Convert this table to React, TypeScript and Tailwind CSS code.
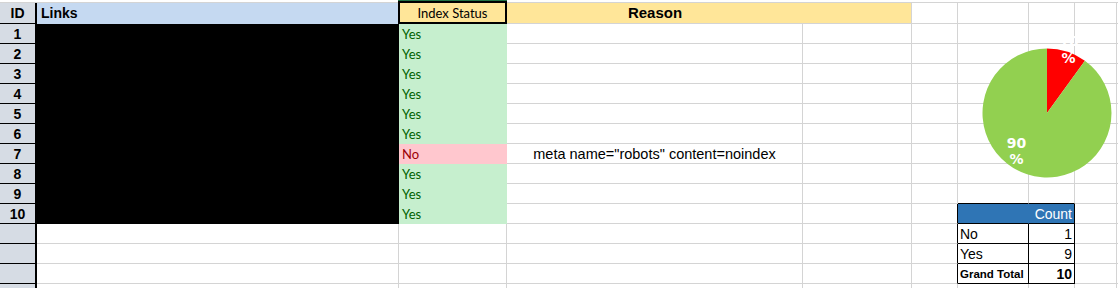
import React from "react";

const rows = Array.from({ length: 14 }, (_, i) => (i < 10 ? i + 1 : null));

function idCell(id: number | null) {
  return (
    <div className="flex h-5 items-end justify-center border-r-2 border-b border-black bg-[#d6dce4] pb-[2px] text-[14px] leading-none font-bold">
      {id}
    </div>
  );
}

function linkCell(id: number | null) {
  return id ? (
    <div className="h-5 border-r border-b border-black bg-black" />
  ) : (
    <div className="h-5 border-r border-b border-[#d4d4d4]" />
  );
}

function statusCell(id: number | null) {
  if (!id) return <div className="h-5 border-r border-b border-[#d4d4d4]" />;
  if (id === 7)
    return (
      <div className="flex h-5 items-end border-r border-b border-[#ffc7ce] bg-[#ffc7ce] pb-[2px] pl-[3px] font-['Lato',sans-serif] text-[13px] leading-none text-[#9c0006]">
        No
      </div>
    );
  return (
    <div className="flex h-5 items-end border-r border-b border-[#c6efce] bg-[#c6efce] pb-[2px] pl-[3px] font-['Lato',sans-serif] text-[13px] leading-none text-[#006100]">
      Yes
    </div>
  );
}

function plain(key: string, children?: React.ReactNode) {
  return (
    <div key={key} className="h-5 border-r border-b border-[#d4d4d4]">
      {children}
    </div>
  );
}

// pivot table sits in rows 10-13, columns 7 and 8
function pivotLeft(r: number) {
  if (r === 8) return <div className="h-5 border-r border-b border-r-[#d4d4d4] border-b-black" />;
  if (r === 9) return <div className="h-5 border-r border-b border-r-[#2f75b5] border-b-black bg-[#2f75b5]" />;
  if (r === 10)
    return <div className="flex h-5 items-end border-r border-b border-black pb-[2px] pl-[2px] text-[14px] leading-none">No</div>;
  if (r === 11)
    return <div className="flex h-5 items-end border-r border-b border-black pb-[2px] pl-[2px] text-[14px] leading-none">Yes</div>;
  if (r === 12)
    return (
      <div className="flex h-5 items-end border-r border-b border-black pb-[3px] pl-[2px] text-[11.5px] leading-none font-bold">
        Grand Total
      </div>
    );
  return <div className="h-5 border-r border-b border-[#d4d4d4]" />;
}

function pivotRight(r: number) {
  if (r === 8) return <div className="h-5 border-r border-b border-r-[#d4d4d4] border-b-black" />;
  if (r === 9)
    return (
      <div className="flex h-5 items-end justify-end border-r border-b border-black bg-[#2f75b5] pr-[2px] pb-[2px] text-[14px] leading-none text-white">
        Count
      </div>
    );
  if (r === 10)
    return <div className="flex h-5 items-end justify-end border-r border-b border-black pr-[2px] pb-[2px] text-[14px] leading-none">1</div>;
  if (r === 11)
    return <div className="flex h-5 items-end justify-end border-r border-b border-black pr-[2px] pb-[2px] text-[14px] leading-none">9</div>;
  if (r === 12)
    return (
      <div className="flex h-5 items-end justify-end border-r border-b border-black pr-[2px] pb-[2px] text-[14px] leading-none font-bold">
        10
      </div>
    );
  return <div className="h-5 border-r border-b border-[#d4d4d4]" />;
}

function PieChart() {
  // centre (107, 93), r 64.5 -> 10% red slice from 12 o'clock
  return (
    <svg className="pointer-events-none absolute top-[20px] left-[940px]" width="178" height="170" viewBox="0 0 178 170">
      <path d="M107 93 L107 28.5 A64.5 64.5 0 0 1 144.91 40.82 Z" fill="#ff0000" />
      <path d="M107 93 L144.91 40.82 A64.5 64.5 0 1 1 107 28.5 Z" fill="#92d050" />
      <g fill="#ffffff" fontFamily="'DejaVu Sans', sans-serif" fontWeight="700" fontSize="14" textAnchor="middle">
        <text x="129" y="26">10</text>
        <text x="128.5" y="43">%</text>
        <text x="76.5" y="128">90</text>
        <text x="76.5" y="144">%</text>
      </g>
    </svg>
  );
}

export default function App() {
  return (
    <div className="relative h-[288px] w-[1118px] overflow-hidden bg-white pt-[2px] font-['Liberation_Sans',Arial,sans-serif] text-black">
      <div className="grid grid-cols-[37px_362px_108px_296px_109px_46px_71px_46px_42px_1fr] border-t border-[#d4d4d4]">
        {/* header row */}
        <div className="flex h-[21px] items-end justify-center border-r-2 border-b border-black bg-[#d6dce4] pb-[3px] text-[14px] leading-none font-bold">
          ID
        </div>
        <div className="flex h-[21px] items-end border-b border-[#c5d9f1] bg-[#c5d9f1] pb-[3px] pl-[4px] text-[14px] leading-none font-bold">
          Links
        </div>
        <div className="relative flex h-[21px] items-end justify-center border-r border-b border-[#ffe699] bg-[#ffe699] pb-[3px] font-['Lato',sans-serif] text-[13px] leading-none">
          Index Status
          <div className="absolute -top-[3px] -right-px -left-px h-px bg-[#217346]" />
          <div className="absolute -top-[2px] -right-px -bottom-px -left-px border-2 border-black" />
        </div>
        <div className="flex h-[21px] items-end justify-center border-b border-[#d4d4d4] bg-[#ffe699] pb-[3px] text-[15px] leading-none font-bold">
          Reason
        </div>
        <div className="h-[21px] border-r border-b border-[#d4d4d4] bg-[#ffe699]" />
        <div className="h-[21px] border-r border-b border-[#d4d4d4]" />
        <div className="h-[21px] border-r border-b border-[#d4d4d4]" />
        <div className="h-[21px] border-r border-b border-[#d4d4d4]" />
        <div className="h-[21px] border-r border-b border-[#d4d4d4]" />
        <div className="h-[21px] border-b border-[#d4d4d4]" />

        {rows.map((id, r) => (
          <React.Fragment key={r}>
            {idCell(id)}
            {linkCell(id)}
            {statusCell(id)}
            {plain(`reason-${r}`, id === 7 ? (
              <div className="flex h-full items-end justify-center pb-[2px] text-[14.5px] leading-none">
                meta name="robots" content=noindex
              </div>
            ) : null)}
            {plain(`c4-${r}`)}
            {r >= 9 && r <= 12 ? (
              <div className="h-5 border-r border-b border-r-black border-b-[#d4d4d4]" />
            ) : (
              plain(`c5-${r}`)
            )}
            {pivotLeft(r)}
            {pivotRight(r)}
            {plain(`c8-${r}`)}
            <div className="h-5 border-b border-[#d4d4d4]" />
          </React.Fragment>
        ))}
      </div>
      <PieChart />
    </div>
  );
}
